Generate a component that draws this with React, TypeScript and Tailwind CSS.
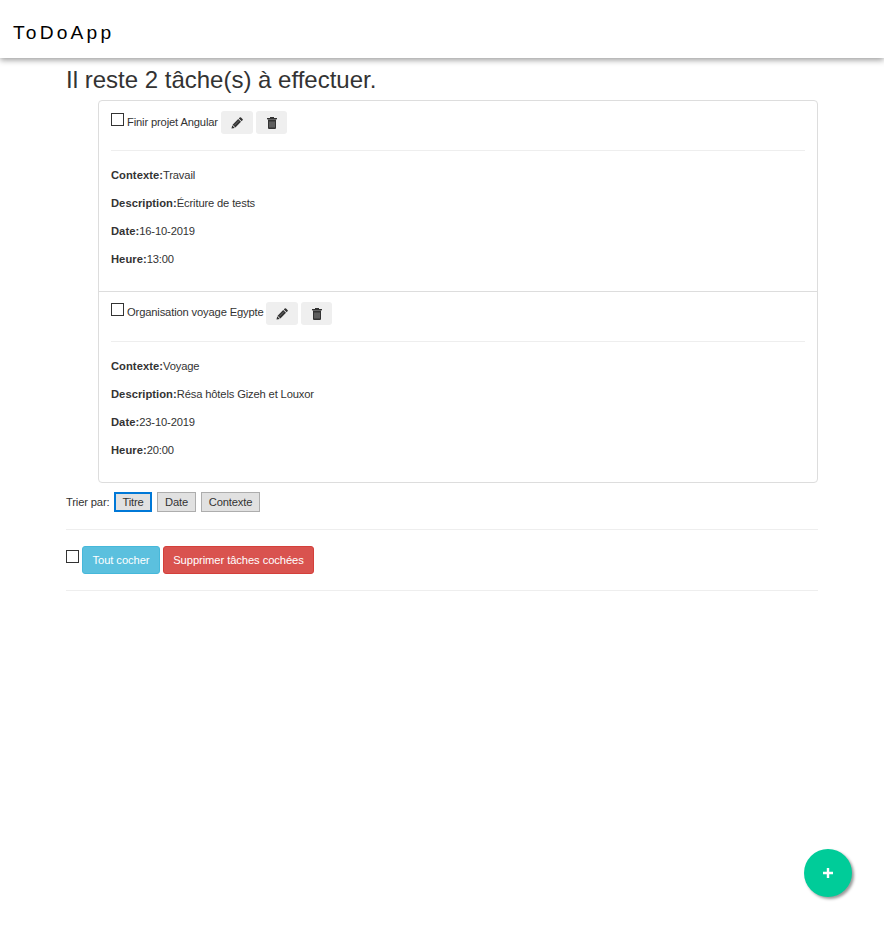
type Task = {
  title: string;
  context: string;
  description: string;
  date: string;
  time: string;
  titleClass: string;
  labelClass: string;
};

const tasks: Task[] = [
  {
    title: "Finir projet Angular",
    context: "Travail",
    description: "Écriture de tests",
    date: "16-10-2019",
    time: "13:00",
    titleClass: "w-[94px]",
    labelClass: "pt-0.5",
  },
  {
    title: "Organisation voyage Egypte",
    context: "Voyage",
    description: "Résa hôtels Gizeh et Louxor",
    date: "23-10-2019",
    time: "20:00",
    titleClass: "w-[139px]",
    labelClass: "pt-px",
  },
];

function Checkbox() {
  return <span role="checkbox" aria-checked="false" className="block size-[13px] shrink-0 border border-[#333] bg-white" />;
}

function Pencil() {
  return (
    <svg width="12" height="12" viewBox="0 0 12 12" fill="#333" aria-hidden="true">
      <path d="M8.7.6a.9.9 0 0 1 1.3 0l1.5 1.4a.9.9 0 0 1 0 1.3l-.8.9L7.8 1.5zM7.2 2.1L10 4.8 4.4 10.5 1.6 7.7zM1.2 8.3l2.6 2.6-3.3.7z" />
      <path d="M3.4 8.3l4.5-4.5" stroke="#8a8a8a" strokeWidth=".6" />
    </svg>
  );
}

function Trash() {
  return (
    <svg width="12" height="12" viewBox="0 0 12 12" fill="#333" aria-hidden="true">
      <path d="M4 0h4v1h3v1H1V1h3zM2 3h8v8a1 1 0 0 1-1 1H3a1 1 0 0 1-1-1z" />
      <path d="M1.5 2h9v1h-9z" fill="#666" />
      <path d="M4 4.5v6M6 4.5v6M8 4.5v6" stroke="#929292" strokeWidth=".9" />
    </svg>
  );
}

function Detail({ label, value }: { label: string; value: string }) {
  return (
    <p className="flex h-4 whitespace-nowrap leading-4">
      <b className="tracking-[0.04px]">{label}:</b>
      <span>{value}</span>
    </p>
  );
}

function TaskItem({ task }: { task: Task }) {
  return (
    <li className="h-[191px] border-b border-[#ddd] px-3 pt-2.5">
      <div className="flex h-[23px]">
        <div className={"flex h-full gap-[3px] " + task.labelClass}>
          <Checkbox />
          <span className={"whitespace-nowrap leading-[18px] " + task.titleClass}>{task.title}</span>
        </div>
        <button aria-label="Modifier" className="flex h-[23px] w-8 items-center justify-center rounded-[3px] bg-[#efefef]">
          <Pencil />
        </button>
        <button aria-label="Supprimer" className="ml-[3px] flex h-[23px] w-[31px] items-center justify-center rounded-[3px] bg-[#efefef]">
          <Trash />
        </button>
      </div>
      <hr className="mt-4 border-[#eee]" />
      <div className="mt-4 flex flex-col gap-3">
        <Detail label="Contexte" value={task.context} />
        <Detail label="Description" value={task.description} />
        <Detail label="Date" value={task.date} />
        <Detail label="Heure" value={task.time} />
      </div>
    </li>
  );
}

export default function App() {
  return (
    <div className="min-h-[929px] bg-white font-['Liberation_Sans',Arial,sans-serif] text-[11.2px] tracking-[-0.15px] text-[#333]">
      <header className="h-[58px] bg-white pl-[13px] pt-[19px] text-[19.2px] leading-7 tracking-[3.2px] text-black shadow-[0_2px_6px_rgba(0,0,0,0.4)]">
        ToDoApp
      </header>
      <main className="ml-[66px] w-[752px] pt-2">
        <h1 className="h-[34px] whitespace-nowrap text-[24px] leading-7 tracking-normal">Il reste 2 tâche(s) à effectuer.</h1>
        <ul className="ml-8 rounded-[4px] border border-[#ddd] [&>li:last-child]:h-[190px] [&>li:last-child]:border-b-0">
          {tasks.map((task) => (
            <TaskItem key={task.title} task={task} />
          ))}
        </ul>
        <div className="mt-[9px] flex h-5 items-center whitespace-nowrap">
          <span className="w-12">Trier par:</span>
          <button className="h-5 w-[38px] border-2 border-[#0078d7] bg-[#e1e1e1]">Titre</button>
          <button className="ml-[5px] h-5 w-[39px] border border-[#adadad] bg-[#e1e1e1]">Date</button>
          <button className="ml-[5px] h-5 w-[59px] border border-[#adadad] bg-[#e1e1e1]">Contexte</button>
        </div>
        <hr className="mt-[17px] border-[#eee]" />
        <div className="mt-4 flex h-7 gap-[3px] whitespace-nowrap tracking-[-0.08px] text-white">
          <div className="pt-1">
            <Checkbox />
          </div>
          <button className="h-7 w-[78px] rounded-[3px] border border-[#46b8da] bg-[#5bc0de]">Tout cocher</button>
          <button className="h-7 w-[151px] rounded-[3px] border border-[#d43f3a] bg-[#d9534f]">Supprimer tâches cochées</button>
        </div>
        <hr className="mt-4 border-[#eee]" />
      </main>
      <button
        aria-label="Ajouter"
        className="fixed bottom-[32px] right-[32px] flex size-12 items-center justify-center rounded-full bg-[#00cc99] shadow-[2px_2px_3px_#999]"
      >
        <svg width="10" height="10" viewBox="0 0 10 10" aria-hidden="true">
          <path d="M5 0v10M0 5h10" stroke="white" strokeWidth="2.4" />
        </svg>
      </button>
    </div>
  );
}
